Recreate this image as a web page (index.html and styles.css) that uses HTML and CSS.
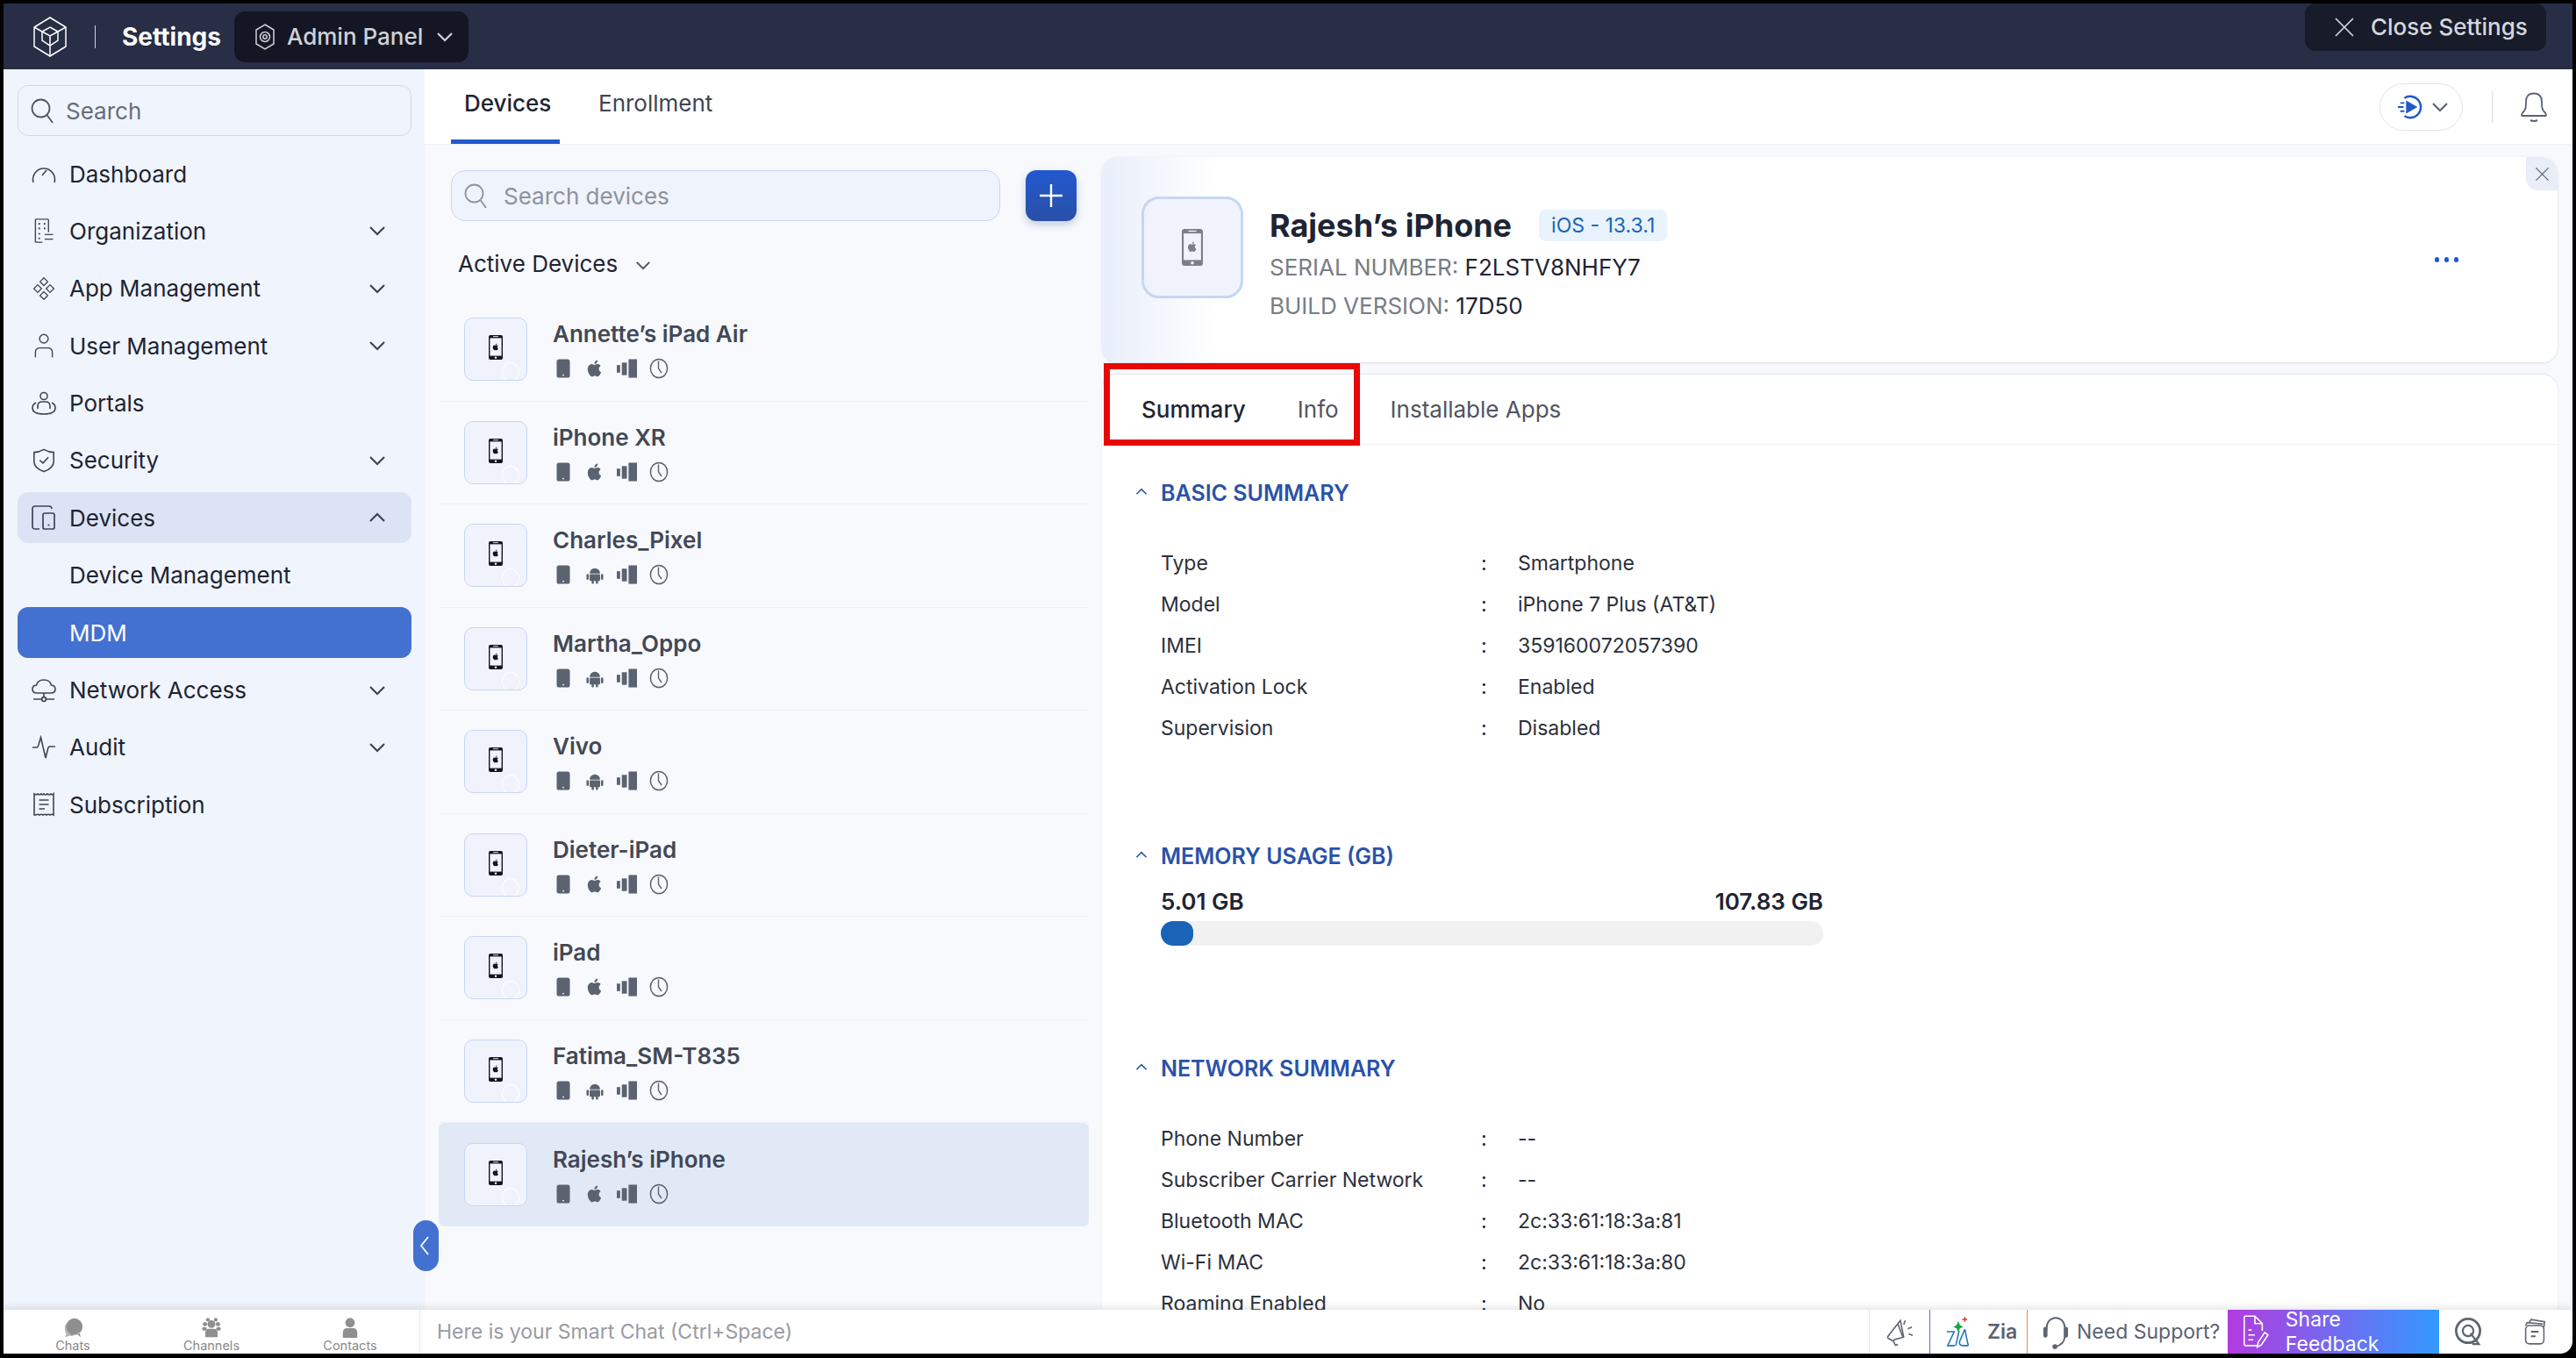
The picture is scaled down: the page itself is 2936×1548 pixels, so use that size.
FILE: index.html
```html
<!DOCTYPE html>
<html lang="en">
<head>
  <meta charset="UTF-8">
  <title>Settings - MDM</title>
  <link rel="stylesheet" href="styles.css">
</head>
<body>
  <svg class="defs">
    <symbol id="i-search" viewBox="0 0 26 30"><circle cx="11.5" cy="12.5" r="10" fill="none" stroke="currentColor" stroke-width="1.8"/><path d="M18.5 20 L25 29" fill="none" stroke="currentColor" stroke-width="1.8"/></symbol>
    <symbol id="i-down" viewBox="0 0 20 12"><path d="M2 2 L10 10 L18 2" fill="none" stroke="currentColor" stroke-width="2.2"/></symbol>
    <symbol id="i-up" viewBox="0 0 20 12"><path d="M2 10 L10 2 L18 10" fill="none" stroke="currentColor" stroke-width="2.2"/></symbol>
    <symbol id="i-close" viewBox="0 0 24 24"><path d="M2 2 L22 22 M22 2 L2 22" fill="none" stroke="currentColor" stroke-width="1.7"/></symbol>
    <symbol id="i-apple" viewBox="0 0 24 24"><path fill="currentColor" d="M17.05 12.54c-.03-2.6 2.12-3.85 2.22-3.91-1.21-1.77-3.09-2.01-3.76-2.04-1.6-.16-3.12.94-3.93.94-.81 0-2.06-.92-3.39-.89-1.74.03-3.35 1.01-4.25 2.57-1.81 3.14-.46 7.8 1.3 10.35.86 1.25 1.89 2.65 3.24 2.6 1.3-.05 1.79-.84 3.36-.84 1.57 0 2.01.84 3.39.81 1.4-.02 2.28-1.27 3.14-2.53.99-1.45 1.4-2.85 1.42-2.92-.03-.01-2.72-1.04-2.75-4.14zM14.47 4.9c.72-.87 1.2-2.08 1.07-3.28-1.03.04-2.28.69-3.02 1.55-.66.77-1.24 2-1.09 3.18 1.15.09 2.33-.58 3.04-1.45z"/></symbol>
    <symbol id="i-android" viewBox="0 0 24 24"><g fill="currentColor"><path d="M5.5 10.5 A6.5 6.5 0 0 1 18.5 10.5 Z"/><rect x="5.5" y="11.5" width="13" height="8.5" rx="1.2"/><rect x="1.6" y="11.2" width="2.8" height="7.4" rx="1.4"/><rect x="19.6" y="11.2" width="2.8" height="7.4" rx="1.4"/><rect x="8" y="19" width="2.8" height="4.4" rx="1.4"/><rect x="13.2" y="19" width="2.8" height="4.4" rx="1.4"/></g></symbol>
    <symbol id="i-phone" viewBox="0 0 16 22"><rect x="0.5" y="0.5" width="15" height="21" rx="2.6" fill="currentColor"/><circle cx="8" cy="18.6" r="0.9" fill="#fff"/></symbol>
    <symbol id="i-bars" viewBox="0 0 24 22"><g fill="currentColor"><rect x="0" y="7" width="4" height="9"/><rect x="6" y="4" width="6" height="15"/><rect x="14" y="0" width="10" height="22"/></g></symbol>
    <symbol id="i-clock" viewBox="0 0 22 24"><ellipse cx="11" cy="12" rx="9.6" ry="10.6" fill="none" stroke="currentColor" stroke-width="1.5"/><path d="M10.5 3.5 V12 L14 17" fill="none" stroke="currentColor" stroke-width="1.4"/></symbol>
    <symbol id="i-mini" viewBox="0 0 16 28"><rect width="16" height="28" rx="2" fill="currentColor"/><rect x="1.4" y="3.4" width="13.2" height="20.2" fill="#f0f3fb"/><circle cx="8" cy="25.8" r="1.2" fill="#f0f3fb"/><rect x="5" y="1.2" width="6" height="0.9" fill="#f0f3fb"/><use href="#i-apple" x="3.5" y="9" width="9" height="9"/></symbol>
  </svg>

  <div class="app">
    <header class="topbar">
      <svg class="logo" viewBox="0 0 40 46"><g fill="none" stroke="#fff" stroke-width="1.5"><path d="M20 1 L38 12 V34 L20 45 L2 34 V12 Z"/><path d="M20 12 L29 17 V27 L20 33 L11 27 V17 Z"/><path d="M11 17 L20 22 L29 17 M20 22 V33 M2 12 L11 17 M38 12 L29 17 M20 33 V45"/></g></svg>
      <span class="top-sep"></span>
      <span class="top-title">Settings</span>
      <div class="panel-btn">
        <svg class="panel-ico" viewBox="0 0 24 32"><g fill="none" stroke="#cfd2d8" stroke-width="1.5"><path d="M12 2 L22 8 V24 L12 30 L2 24 V8 Z"/><circle cx="12" cy="16" r="5.5"/><circle cx="12" cy="16" r="2.2"/></g></svg>
        <span>Admin Panel</span>
        <svg class="panel-arrow"><use href="#i-down"/></svg>
      </div>
      <div class="close-btn">
        <svg class="close-ico"><use href="#i-close"/></svg>
        <span>Close Settings</span>
      </div>
    </header>

    <div class="content">
      <aside class="sidebar">
        <div class="side-search">
          <svg class="search-ico"><use href="#i-search"/></svg>
          <span>Search</span>
        </div>
        <nav class="side-nav">
          <a class="side-item">
            <svg class="side-ico" viewBox="0 0 28 28"><g fill="none" stroke="currentColor" stroke-width="1.6"><path d="M2 24 A12.5 12.5 0 1 1 26 24"/><path d="M12 16 L17 10"/></g></svg>
            <span>Dashboard</span>
          </a>
          <a class="side-item">
            <svg class="side-ico" viewBox="0 0 28 32"><g fill="none" stroke="currentColor" stroke-width="1.6"><path d="M3 31 V2 Q3 1 4 1 H19 Q20 1 20 2 V18 M3 31 H12"/><path d="M15 21 H26 M15 27 H26"/></g><g fill="currentColor"><circle cx="8" cy="7" r="1.2"/><circle cx="15" cy="7" r="1.2"/><circle cx="8" cy="13" r="1.2"/><circle cx="15" cy="13" r="1.2"/><circle cx="8" cy="20" r="1.2"/><circle cx="8" cy="26" r="1.2"/></g></svg>
            <span>Organization</span>
            <svg class="side-arrow"><use href="#i-down"/></svg>
          </a>
          <a class="side-item">
            <svg class="side-ico" viewBox="0 0 28 32"><g fill="none" stroke="currentColor" stroke-width="1.5"><path d="M14 2 L19 7 L14 12 L9 7 Z"/><path d="M14 20 L19 25 L14 30 L9 25 Z"/><path d="M6 11 L11 16 L6 21 L1 16 Z"/><path d="M22 11 L27 16 L22 21 L17 16 Z"/></g></svg>
            <span>App Management</span>
            <svg class="side-arrow"><use href="#i-down"/></svg>
          </a>
          <a class="side-item">
            <svg class="side-ico" viewBox="0 0 28 32"><g fill="none" stroke="currentColor" stroke-width="1.6"><circle cx="14" cy="7" r="5.6"/><path d="M3 31 V25 Q3 19 9 19 H19 Q25 19 25 25 V31"/></g></svg>
            <span>User Management</span>
            <svg class="side-arrow"><use href="#i-down"/></svg>
          </a>
          <a class="side-item">
            <svg class="side-ico" viewBox="0 0 28 28"><g fill="none" stroke="currentColor" stroke-width="1.6"><circle cx="14" cy="5.5" r="4"/><path d="M7 20 V17 Q7 12 12 12 H16 Q21 12 21 17 V20"/><path d="M5 13 Q1 15 1 19 Q1 26 14 26 Q27 26 27 19 Q27 15 23 13"/></g></svg>
            <span>Portals</span>
          </a>
          <a class="side-item">
            <svg class="side-ico" viewBox="0 0 28 30"><g fill="none" stroke="currentColor" stroke-width="1.7"><path d="M14 1.5 Q20 5 26 5 V16 Q26 24 14 28.5 Q2 24 2 16 V5 Q8 5 14 1.5 Z"/><path d="M9 14.5 L13 18 L19.5 11"/></g></svg>
            <span>Security</span>
            <svg class="side-arrow"><use href="#i-down"/></svg>
          </a>
          <a class="side-item side-open">
            <svg class="side-ico" viewBox="0 0 28 28"><g fill="none" stroke="currentColor" stroke-width="1.7"><path d="M9 27 H4 Q1 27 1 24 V4 Q1 1 4 1 H20 Q23 1 23 4"/><rect x="13" y="9" width="13" height="18" rx="2"/></g><circle cx="19.5" cy="22.5" r="1" fill="currentColor"/></svg>
            <span>Devices</span>
            <svg class="side-arrow"><use href="#i-up"/></svg>
          </a>
          <a class="side-item side-sub"><span>Device Management</span></a>
          <a class="side-item side-sub side-current"><span>MDM</span></a>
          <a class="side-item">
            <svg class="side-ico" viewBox="0 0 28 26"><g fill="none" stroke="currentColor" stroke-width="1.6"><path d="M7 16 H6 Q1 16 1 11.5 Q1 7.5 5.5 7 Q7 1 14 1 Q21 1 22.5 7 Q27 7.5 27 11.5 Q27 16 22 16 Z"/><path d="M14 16 V21 M2 23 H11 M17 23 H26"/><circle cx="14" cy="23" r="2.4"/></g></svg>
            <span>Network Access</span>
            <svg class="side-arrow"><use href="#i-down"/></svg>
          </a>
          <a class="side-item">
            <svg class="side-ico" viewBox="0 0 28 28"><path d="M1 14 H6 Q7 14 8 11 L10.5 2.5 L16 26 L19 14 Q19.5 13 21 13 H27" fill="none" stroke="currentColor" stroke-width="1.6"/></svg>
            <span>Audit</span>
            <svg class="side-arrow"><use href="#i-down"/></svg>
          </a>
          <a class="side-item">
            <svg class="side-ico" viewBox="0 0 28 28"><g fill="none" stroke="currentColor" stroke-width="1.6"><path d="M3 2 Q5 3.5 7 2 Q9 3.5 11 2 Q13 3.5 14 2 Q16 3.5 18 2 Q20 3.5 22 2 Q24 3.5 25 2 V26 Q23 24.5 21 26 Q19 24.5 17 26 Q15 24.5 13 26 Q11 24.5 9 26 Q7 24.5 5 26 L3 26 Z"/><path d="M8.5 9 H19.5 M8.5 14 H19.5 M8.5 19 H15"/></g></svg>
            <span>Subscription</span>
          </a>
        </nav>
      </aside>

      <main class="main">
        <div class="tabbar">
          <a class="tabbar-tab tabbar-active">Devices</a>
          <a class="tabbar-tab">Enrollment</a>
          <div class="tour-btn">
            <svg class="tour-ico" viewBox="0 0 32 32"><path d="M9 5 A13 13 0 1 1 9 27" fill="none" stroke="#2258cf" stroke-width="2.6"/><path d="M11 8 L25 16 L11 24 Z" fill="#2258cf"/><path d="M4 11 H9 M1 16 H8 M4 21 H9" fill="none" stroke="#2258cf" stroke-width="2"/></svg>
            <svg class="tour-arrow"><use href="#i-down"/></svg>
          </div>
          <span class="tabbar-sep"></span>
          <svg class="bell" viewBox="0 0 30 34"><g fill="none" stroke="#5b6270" stroke-width="1.8"><path d="M1 26 Q1 24 4 21.5 Q6 19 6 14 V11 Q6 1.5 15 1.5 Q24 1.5 24 11 V14 Q24 19 26 21.5 Q29 24 29 26 Q29 27 28 27 H2 Q1 27 1 26 Z"/><path d="M11 32 Q15 34 19 32" stroke-width="2"/></g></svg>
        </div>

        <div class="work">
          <section class="devices">
            <div class="devices-top">
              <div class="dev-search">
                <svg class="dev-search-ico"><use href="#i-search"/></svg>
                <span>Search devices</span>
              </div>
              <button class="add-btn"><svg viewBox="0 0 28 28"><path d="M14 1 V27 M1 14 H27" fill="none" stroke="#fff" stroke-width="2.4"/></svg></button>
            </div>
            <div class="dev-filter">
              <span>Active Devices</span>
              <svg><use href="#i-down"/></svg>
            </div>
            <ul class="dev-list">
              <li class="dev-row">
                <div class="dev-thumb"><svg class="mini"><use href="#i-mini"/></svg></div>
                <div class="dev-info"><div class="dev-name">Annette’s iPad Air</div>
                  <div class="dev-icons"><svg class="st-phone"><use href="#i-phone"/></svg><svg class="st-os"><use href="#i-apple"/></svg><svg class="st-bars"><use href="#i-bars"/></svg><svg class="st-clock"><use href="#i-clock"/></svg></div></div>
              </li>
              <li class="dev-row">
                <div class="dev-thumb"><svg class="mini"><use href="#i-mini"/></svg></div>
                <div class="dev-info"><div class="dev-name">iPhone XR</div>
                  <div class="dev-icons"><svg class="st-phone"><use href="#i-phone"/></svg><svg class="st-os"><use href="#i-apple"/></svg><svg class="st-bars"><use href="#i-bars"/></svg><svg class="st-clock"><use href="#i-clock"/></svg></div></div>
              </li>
              <li class="dev-row">
                <div class="dev-thumb"><svg class="mini"><use href="#i-mini"/></svg></div>
                <div class="dev-info"><div class="dev-name">Charles_Pixel</div>
                  <div class="dev-icons"><svg class="st-phone"><use href="#i-phone"/></svg><svg class="st-os"><use href="#i-android"/></svg><svg class="st-bars"><use href="#i-bars"/></svg><svg class="st-clock"><use href="#i-clock"/></svg></div></div>
              </li>
              <li class="dev-row">
                <div class="dev-thumb"><svg class="mini"><use href="#i-mini"/></svg></div>
                <div class="dev-info"><div class="dev-name">Martha_Oppo</div>
                  <div class="dev-icons"><svg class="st-phone"><use href="#i-phone"/></svg><svg class="st-os"><use href="#i-android"/></svg><svg class="st-bars"><use href="#i-bars"/></svg><svg class="st-clock"><use href="#i-clock"/></svg></div></div>
              </li>
              <li class="dev-row">
                <div class="dev-thumb"><svg class="mini"><use href="#i-mini"/></svg></div>
                <div class="dev-info"><div class="dev-name">Vivo</div>
                  <div class="dev-icons"><svg class="st-phone"><use href="#i-phone"/></svg><svg class="st-os"><use href="#i-android"/></svg><svg class="st-bars"><use href="#i-bars"/></svg><svg class="st-clock"><use href="#i-clock"/></svg></div></div>
              </li>
              <li class="dev-row">
                <div class="dev-thumb"><svg class="mini"><use href="#i-mini"/></svg></div>
                <div class="dev-info"><div class="dev-name">Dieter-iPad</div>
                  <div class="dev-icons"><svg class="st-phone"><use href="#i-phone"/></svg><svg class="st-os"><use href="#i-apple"/></svg><svg class="st-bars"><use href="#i-bars"/></svg><svg class="st-clock"><use href="#i-clock"/></svg></div></div>
              </li>
              <li class="dev-row">
                <div class="dev-thumb"><svg class="mini"><use href="#i-mini"/></svg></div>
                <div class="dev-info"><div class="dev-name">iPad</div>
                  <div class="dev-icons"><svg class="st-phone"><use href="#i-phone"/></svg><svg class="st-os"><use href="#i-apple"/></svg><svg class="st-bars"><use href="#i-bars"/></svg><svg class="st-clock"><use href="#i-clock"/></svg></div></div>
              </li>
              <li class="dev-row">
                <div class="dev-thumb"><svg class="mini"><use href="#i-mini"/></svg></div>
                <div class="dev-info"><div class="dev-name">Fatima_SM-T835</div>
                  <div class="dev-icons"><svg class="st-phone"><use href="#i-phone"/></svg><svg class="st-os"><use href="#i-android"/></svg><svg class="st-bars"><use href="#i-bars"/></svg><svg class="st-clock"><use href="#i-clock"/></svg></div></div>
              </li>
              <li class="dev-row dev-selected">
                <div class="dev-thumb"><svg class="mini"><use href="#i-mini"/></svg></div>
                <div class="dev-info"><div class="dev-name">Rajesh’s iPhone</div>
                  <div class="dev-icons"><svg class="st-phone"><use href="#i-phone"/></svg><svg class="st-os"><use href="#i-apple"/></svg><svg class="st-bars"><use href="#i-bars"/></svg><svg class="st-clock"><use href="#i-clock"/></svg></div></div>
              </li>
            </ul>
          </section>

          <section class="detail">
            <div class="det-head">
              <div class="det-thumb"><svg class="det-phone"><use href="#i-mini"/></svg></div>
              <div class="det-text">
                <div class="det-title"><h1>Rajesh’s iPhone</h1><span class="os-badge">iOS - 13.3.1</span></div>
                <div class="det-line"><span>SERIAL NUMBER:</span> F2LSTV8NHFY7</div>
                <div class="det-line"><span>BUILD VERSION:</span> 17D50</div>
              </div>
              <div class="det-dots"><i></i><i></i><i></i></div>
              <div class="det-close"><svg><use href="#i-close"/></svg></div>
            </div>

            <div class="det-body">
              <div class="det-tabs">
                <a class="det-tab det-tab-on">Summary</a>
                <a class="det-tab">Info</a>
                <a class="det-tab">Installable Apps</a>
              </div>

              <div class="sec-head"><svg><use href="#i-up"/></svg>BASIC SUMMARY</div>
              <dl class="kv">
                <div class="kv-row"><dt>Type</dt><b>:</b><dd>Smartphone</dd></div>
                <div class="kv-row"><dt>Model</dt><b>:</b><dd>iPhone 7 Plus (AT&amp;T)</dd></div>
                <div class="kv-row"><dt>IMEI</dt><b>:</b><dd>359160072057390</dd></div>
                <div class="kv-row"><dt>Activation Lock</dt><b>:</b><dd>Enabled</dd></div>
                <div class="kv-row"><dt>Supervision</dt><b>:</b><dd>Disabled</dd></div>
              </dl>

              <div class="sec-head sec-memory"><svg><use href="#i-up"/></svg>MEMORY USAGE (GB)</div>
              <div class="mem">
                <div class="mem-vals"><span>5.01 GB</span><span>107.83 GB</span></div>
                <div class="mem-bar"><div class="mem-fill" style="width: 4.9%"></div></div>
              </div>

              <div class="sec-head sec-network"><svg><use href="#i-up"/></svg>NETWORK SUMMARY</div>
              <dl class="kv">
                <div class="kv-row"><dt>Phone Number</dt><b>:</b><dd>--</dd></div>
                <div class="kv-row"><dt>Subscriber Carrier Network</dt><b>:</b><dd>--</dd></div>
                <div class="kv-row"><dt>Bluetooth MAC</dt><b>:</b><dd>2c:33:61:18:3a:81</dd></div>
                <div class="kv-row"><dt>Wi-Fi MAC</dt><b>:</b><dd>2c:33:61:18:3a:80</dd></div>
                <div class="kv-row"><dt>Roaming Enabled</dt><b>:</b><dd>No</dd></div>
              </dl>
            </div>
            <div class="red-mark"></div>
          </section>
        </div>
      </main>

      <div class="side-toggle"><svg viewBox="0 0 12 24"><path d="M10 2 L2 12 L10 22" fill="none" stroke="#fff" stroke-width="1.8"/></svg></div>
    </div>

    <footer class="footer">
      <div class="foot-apps">
        <div class="foot-app">
          <svg viewBox="0 0 28 28"><path d="M11 5 Q2 7 3 16 Q3 20 5 23 L3 27 L10 25 Q13 26 15 25 Z" fill="#b5b5b5"/><path d="M16 1 A11.5 11.5 0 0 1 16 24 L12 24 L10 22 Q5 18 5 12 A11.5 11.5 0 0 1 16 1 Z M20 23 L25 27 L23 20 Z" fill="#8f8f8f"/></svg>
          <span>Chats</span>
        </div>
        <div class="foot-app">
          <svg viewBox="0 0 28 28"><g fill="#8f8f8f"><circle cx="14" cy="9" r="5.4"/><path d="M5.5 27 V21 Q5.5 15.5 10 15.5 H18 Q22.5 15.5 22.5 21 V27 Z"/><circle cx="5" cy="9" r="3"/><circle cx="23" cy="9" r="3"/><circle cx="9" cy="3" r="2.6"/><circle cx="20" cy="3" r="2.6"/><rect x="1" y="13" width="6.5" height="5" rx="2.4"/><rect x="20.5" y="13" width="6.5" height="5" rx="2.4"/></g></svg>
          <span>Channels</span>
        </div>
        <div class="foot-app">
          <svg viewBox="0 0 28 28"><g fill="#8f8f8f"><circle cx="14" cy="7" r="6.6"/><path d="M4 28 V21 Q4 14.5 10 14.5 H18 Q24 14.5 24 21 V28 Z"/></g></svg>
          <span>Contacts</span>
        </div>
      </div>
      <div class="foot-chat">Here is your Smart Chat (Ctrl+Space)</div>
      <div class="foot-item foot-announce">
        <svg viewBox="0 0 34 36"><g fill="none" stroke="#5f6570" stroke-width="1.7"><path d="M18 4 L3 23 Q2 25 4 26 L8 28 Q10 29 11 27 L22 24 Z"/><path d="M15 8 L21 24"/><path d="M9 28 L12 34 L15 33"/><path d="M24 4 L22 9 M32 12 L27 14 M33 22 L28 20"/></g></svg>
      </div>
      <div class="foot-item foot-zia">
        <svg viewBox="0 0 30 38"><path d="M2 19 H11 L3 36 H12 M13 36 L17 18 M24 16 L18 30 Q16 36 22 36 H27 Q29 36 27.5 33 L24 16" fill="none" stroke="#2376bd" stroke-width="1.7"/><path d="M16 6 L18 11 L22 13 L18 15 L16 20 L14 15 L10 13 L14 11 Z" fill="#18a34a"/><path d="M24 1 V7 M21 4 H27" stroke="#e03131" stroke-width="1.6"/></svg>
        <span>Zia</span>
      </div>
      <div class="foot-item foot-help">
        <svg viewBox="0 0 32 42"><g fill="none" stroke="#5f6570" stroke-width="2"><path d="M5 17 V14 A11 12 0 0 1 27 14 V24 Q27 34 16 37"/></g><g fill="#5f6570"><rect x="1" y="13" width="5" height="13" rx="2.4"/><rect x="26" y="13" width="5" height="13" rx="2.4"/><circle cx="15" cy="37" r="3"/></g></svg>
        <span>Need Support?</span>
      </div>
      <div class="foot-feedback">
        <svg viewBox="0 0 32 42"><g fill="none" stroke="#fff" stroke-width="1.7"><path d="M19 38 H4 Q2 38 2 36 V4 Q2 2 4 2 H15 L24 11 V20 M15 2 V11 H24"/><path d="M7 19 H11 M7 25 H15 M7 31 H13"/><path d="M18 40 L19 34 L27 22 L31 25 L23 37 Z"/></g></svg>
        <span>Share Feedback</span>
      </div>
      <div class="foot-q">
        <svg viewBox="0 0 34 36"><g fill="none" stroke="#5f6570" stroke-width="3"><circle cx="17" cy="17" r="14.5"/></g><g fill="none" stroke="#5f6570" stroke-width="2.4"><circle cx="17" cy="17" r="6.5"/><path d="M20 20 L30 33 H22"/></g></svg>
      </div>
      <div class="foot-notes">
        <svg viewBox="0 0 30 36"><g fill="none" stroke="#5f6570" stroke-width="1.8"><path d="M8 6 L10 2 L28 5 L27 12"/><path d="M3 10 L5 6 L26 8"/><rect x="3" y="10" width="24" height="24" rx="5"/><path d="M10 18 H20 M10 24 H16" stroke-width="2.2"/></g></svg>
      </div>
    </footer>
  </div>
</body>
</html>
```

FILE: styles.css
```css
* {
  box-sizing: border-box;
}

html, body {
  height: 100%;
}

body {
  margin: 0;
  background: #000;
  font-family: Inter, "Noto Sans", sans-serif;
  color: #1e2433;
  overflow: hidden;
}

.defs {
  display: none;
}

.app {
  display: flex;
  flex-direction: column;
  height: 1548px;
  padding: 4px 4px 5px 4px;
}

/* top bar */
.topbar {
  display: flex;
  align-items: center;
  flex: none;
  height: 75px;
  background: #282e45;
  padding-left: 33px;
}

.logo {
  width: 40px;
  height: 46px;
}

.top-sep {
  width: 1px;
  height: 26px;
  margin-left: 31px;
  background: #cfd2d8;
}

.top-title {
  margin-left: 30px;
  font-size: 28px;
  font-weight: 700;
  color: #fff;
}

.panel-btn {
  display: flex;
  align-items: center;
  width: 267px;
  height: 58px;
  margin-left: 15px;
  padding-left: 23px;
  border-radius: 12px;
  background: #141723;
  font-size: 26px;
  font-weight: 500;
  color: #cfd2d8;
}

.panel-ico {
  width: 24px;
  height: 32px;
  margin-right: 13px;
}

.panel-arrow {
  width: 20px;
  height: 12px;
  margin-left: 15px;
}

.close-btn {
  display: flex;
  align-items: center;
  width: 275px;
  height: 54px;
  margin-left: auto;
  margin-right: 30px;
  margin-top: -22px;
  padding-left: 33px;
  border-radius: 12px;
  background: #181c2a;
  font-size: 26px;
  font-weight: 500;
  color: #d5d7dc;
}

.close-ico {
  width: 24px;
  height: 24px;
  margin-right: 18px;
}

/* layout */
.content {
  position: relative;
  display: flex;
  flex: 1;
  min-height: 0;
}

.sidebar {
  flex: none;
  width: 480px;
  padding: 18px 15px 0 16px;
  background: #f0f4fc;
}

.side-search {
  display: flex;
  align-items: center;
  height: 58px;
  padding-left: 14px;
  border: 1.5px solid #d5d9e0;
  border-radius: 12px;
  font-size: 26px;
  color: #676d79;
}

.search-ico {
  width: 26px;
  height: 30px;
  margin-right: 14px;
  color: #4f5562;
}

.side-nav {
  display: flex;
  flex-direction: column;
  gap: 7.4px;
  margin-top: 14px;
}

.side-item {
  display: flex;
  align-items: center;
  height: 58px;
  padding: 0 29px 0 16px;
  border-radius: 12px;
  font-size: 26px;
}

.side-ico {
  flex: none;
  width: 28px;
  height: 28px;
  margin-right: 15px;
  color: #3f4552;
}

.side-sub {
  padding-left: 59px;
}

.side-arrow {
  width: 20px;
  height: 12px;
  margin-left: auto;
  color: #3f4552;
}

.side-open {
  background: #dce3f4;
}

.side-current {
  background: #4371d1;
  color: #fff;
}

.main {
  display: flex;
  flex-direction: column;
  flex: 1;
  min-width: 0;
}

/* devices / enrollment bar */
.tabbar {
  display: flex;
  align-items: center;
  flex: none;
  height: 86px;
  padding: 0 29px 0 30px;
  background: #fff;
  border-bottom: 1.5px solid #eef0f5;
}

.tabbar-tab {
  position: relative;
  display: flex;
  align-items: center;
  height: 100%;
  padding: 0 15px 8px;
  margin-right: 14px;
  font-size: 26px;
  color: #3f4552;
}

.tabbar-active {
  width: 124px;
  padding-bottom: 8px;
  font-weight: 500;
  color: #1e2433;
  border-bottom: 5px solid #2258cf;
  padding-top: 5px;
  margin-right: 29px;
}

.tour-btn {
  display: flex;
  align-items: center;
  width: 95px;
  height: 54px;
  margin-left: auto;
  padding-left: 19px;
  border: 1.5px solid #e3e5e9;
  border-radius: 27px;
}

.tour-ico {
  width: 30px;
  height: 30px;
}

.tour-arrow {
  width: 20px;
  height: 12px;
  margin-left: 9px;
  color: #5b6270;
}

.tabbar-sep {
  width: 1.5px;
  height: 36px;
  margin: 0 32px 0 33px;
  background: #d9dce2;
}

.bell {
  width: 30px;
  height: 34px;
}

.work {
  display: flex;
  flex: 1;
  min-height: 0;
}

/* device list */
.devices {
  flex: none;
  width: 772px;
  padding-top: 29px;
  background: #f7f9fd;
  overflow: hidden;
}

.devices-top {
  display: flex;
  padding-left: 30px;
}

.dev-search {
  display: flex;
  align-items: center;
  width: 626px;
  height: 58px;
  padding-left: 14px;
  border: 1.5px solid #c8d6f4;
  border-radius: 16px;
  background: #eff3fb;
  font-size: 26px;
  color: #8d929c;
}

.dev-search-ico {
  width: 26px;
  height: 30px;
  margin-right: 19px;
  color: #8d929c;
}

.add-btn {
  display: flex;
  align-items: center;
  justify-content: center;
  width: 58px;
  height: 58px;
  margin-left: 29px;
  padding: 0;
  border: none;
  border-radius: 12px;
  background: linear-gradient(180deg, #2258cf, #2a50a6);
  box-shadow: 0 4px 8px rgba(40, 70, 140, 0.25);
}

.add-btn svg {
  width: 28px;
  height: 28px;
}

.dev-filter {
  display: flex;
  align-items: center;
  height: 34px;
  margin-top: 31px;
  padding-left: 38px;
  font-size: 26px;
}

.dev-filter svg {
  width: 18px;
  height: 11px;
  margin-left: 20px;
  margin-top: 4px;
  color: #4f5562;
}

.dev-list {
  margin: 23px 15px 0 16px;
  padding: 0;
  list-style: none;
}

.dev-row {
  display: flex;
  align-items: center;
  height: 117.5px;
  padding-left: 29px;
  border-bottom: 1.5px solid #eef0f5;
}

.dev-selected {
  background: #e2e9f6;
  border-bottom: none;
  border-radius: 6px;
}

.dev-thumb {
  position: relative;
  display: flex;
  align-items: center;
  justify-content: center;
  flex: none;
  width: 72px;
  height: 72px;
  border: 1.5px solid #c8d6f4;
  border-radius: 10px;
  background: #f0f3fb;
  overflow: hidden;
}

.dev-thumb::after {
  content: "";
  position: absolute;
  right: 8px;
  bottom: -2px;
  width: 18px;
  height: 20px;
  border: 1.5px solid #fff;
  border-radius: 50%;
}

.mini {
  width: 16px;
  height: 28px;
  margin-bottom: 4px;
  color: #14161d;
}

.dev-info {
  margin-left: 29px;
}

.dev-name {
  font-size: 26px;
  font-weight: 600;
  line-height: 34px;
  color: #424856;
}

.dev-icons {
  display: flex;
  align-items: center;
  height: 24px;
  margin-top: 10px;
  padding-left: 4px;
  color: #5b6270;
}

.st-phone {
  width: 16px;
  height: 22px;
}

.st-os {
  width: 22px;
  height: 22px;
  margin-left: 17px;
}

.st-bars {
  width: 23px;
  height: 22px;
  margin-left: 14px;
}

.st-clock {
  width: 22px;
  height: 24px;
  margin-left: 14px;
}

/* detail panel */
.detail {
  position: relative;
  display: flex;
  flex-direction: column;
  flex: 1;
  min-width: 0;
  padding: 14px 17px 0 0;
  background: #f7f9fd;
}

.det-head {
  position: relative;
  display: flex;
  flex: none;
  height: 234px;
  padding: 45px 0 0 45px;
  border-radius: 18px;
  background: linear-gradient(90deg, #e8eefa 0, #fff 130px);
  box-shadow: 0 1px 3px rgba(60, 70, 100, 0.15);
}

.det-thumb {
  display: flex;
  align-items: center;
  justify-content: center;
  flex: none;
  width: 116px;
  height: 116px;
  border: 3.5px solid #c8d6f4;
  border-radius: 20px;
  background: #f0f3fb;
}

.det-phone {
  width: 24px;
  height: 44px;
  color: #7b8088;
}

.det-text {
  margin: 11px 0 0 30px;
}

.det-title {
  display: flex;
  align-items: center;
  height: 44px;
}

.det-title h1 {
  margin: 0;
  font-size: 36px;
  font-weight: 700;
  color: #1e2433;
}

.os-badge {
  margin-left: 31px;
  padding: 0 14px;
  line-height: 36px;
  border-radius: 8px;
  background: #e8f3fd;
  font-size: 23px;
  color: #1a64b8;
}

.det-line {
  margin-top: 8px;
  line-height: 36px;
  font-size: 26px;
  color: #1e2433;
}

.det-line:first-of-type {
  margin-top: 11px;
}

.det-line span {
  color: #787d85;
}

.det-dots {
  display: flex;
  gap: 5.5px;
  align-self: center;
  margin-left: auto;
  margin-right: 113px;
  margin-top: -45px;
}

.det-dots i {
  width: 5.5px;
  height: 5.5px;
  border-radius: 50%;
  background: #2258cf;
}

.det-close {
  position: absolute;
  top: 0;
  right: 0;
  display: flex;
  align-items: center;
  justify-content: center;
  width: 36px;
  height: 38px;
  border-radius: 0 18px 0 14px;
  background: #e8edf8;
  color: #5b6270;
}

.det-close svg {
  width: 17px;
  height: 17px;
}

.det-body {
  flex: 1;
  min-height: 0;
  margin-top: 14px;
  padding-bottom: 0;
  border-radius: 18px 18px 0 0;
  background: #fff;
  box-shadow: 0 -1px 2px rgba(60, 70, 100, 0.12);
  overflow: hidden;
}

.det-tabs {
  display: flex;
  align-items: center;
  height: 80px;
  padding-left: 45px;
  border-bottom: 1.5px solid #eef0f5;
  font-size: 26px;
  color: #4f5562;
}

.det-tab {
  margin-right: 59px;
}

.det-tab-on {
  font-weight: 500;
  color: #1e2433;
}

.sec-head {
  position: relative;
  display: flex;
  align-items: center;
  height: 30px;
  margin-top: 40px;
  padding-left: 67px;
  font-size: 25px;
  font-weight: 600;
  color: #2a52a8;
}

.sec-head svg {
  position: absolute;
  left: 38px;
  top: 9px;
  width: 14px;
  height: 9px;
  color: #2a52a8;
}

.sec-memory {
  margin-top: 108px;
}

.sec-network {
  margin-top: 125px;
}

.kv {
  margin: 41px 0 0 67px;
}

.kv-row {
  display: grid;
  grid-template-columns: 365px 42px 1fr;
  align-items: center;
  height: 47px;
  font-size: 23px;
}

.kv-row dt {
  color: #2b303c;
}

.kv-row b {
  font-weight: 400;
}

.kv-row dd {
  margin: 0;
  color: #2b303c;
}

.mem {
  width: 755px;
  margin: 21px 0 0 67px;
}

.mem-vals {
  display: flex;
  justify-content: space-between;
  height: 38px;
  font-size: 26px;
  font-weight: 600;
  line-height: 32px;
}

.mem-bar {
  height: 28px;
  border-radius: 14px;
  background: #f1f1f1;
  overflow: hidden;
}

.mem-fill {
  height: 100%;
  border-radius: 12px;
  background: #1a64b8;
}

.red-mark {
  position: absolute;
  left: 2px;
  top: 0px;
  width: 292px;
  height: 94px;
  margin-top: 249px;
  border: 7.5px solid #e80808;
}

.side-toggle {
  position: absolute;
  left: 467px;
  top: 1312px;
  display: flex;
  align-items: center;
  justify-content: center;
  width: 29px;
  height: 58px;
  border-radius: 15px;
  background: #4371d1;
}

.side-toggle svg {
  width: 12px;
  height: 24px;
  margin-right: 4px;
}

/* bottom bar */
.footer {
  position: relative;
  display: flex;
  align-items: stretch;
  flex: none;
  height: 50px;
  background: #fff;
  border-radius: 0 0 14px 0;
  box-shadow: 0 -2px 8px rgba(40, 45, 60, 0.14);
  overflow: hidden;
}

.foot-apps {
  display: grid;
  grid-template-columns: repeat(3, 1fr);
  flex: none;
  width: 475px;
  border-right: 1.5px solid #e8e8e8;
}

.foot-app {
  display: flex;
  flex-direction: column;
  align-items: center;
  padding-top: 9px;
  font-size: 14.5px;
  line-height: 17px;
  color: #8a8a8a;
}

.foot-app svg {
  flex: none;
  width: 26px;
  height: 23px;
}

.foot-chat {
  flex: 1;
  padding-left: 19px;
  line-height: 50px;
  font-size: 23px;
  color: #989ba1;
}

.foot-item {
  display: flex;
  align-items: center;
  flex: none;
  font-size: 23px;
  color: #5b6270;
}

.foot-announce {
  justify-content: center;
  width: 69px;
  border-left: 1.5px solid #e8e8e8;
}

.foot-announce svg {
  width: 32px;
  height: 35px;
}

.foot-zia {
  width: 111px;
  padding-left: 17px;
  border-left: 1.5px solid #6a62e0;
  font-weight: 600;
}

.foot-zia svg {
  width: 28px;
  height: 38px;
  margin-right: 20px;
}

.foot-help {
  width: 229px;
  padding-left: 17px;
  border-left: 1.5px solid #ee8a3c;
}

.foot-help svg {
  width: 30px;
  height: 40px;
  margin-right: 9px;
  margin-top: 4px;
}

.foot-feedback {
  display: flex;
  align-items: center;
  flex: none;
  width: 241px;
  padding-left: 17px;
  background: linear-gradient(90deg, #b23be0, #3399ff);
  font-size: 23px;
  color: #fff;
}

.foot-feedback svg {
  width: 30px;
  height: 40px;
  margin-right: 19px;
}

.foot-q {
  display: flex;
  align-items: center;
  justify-content: center;
  flex: none;
  width: 65px;
}

.foot-q svg {
  width: 32px;
  height: 34px;
}

.foot-notes {
  display: flex;
  align-items: center;
  justify-content: center;
  flex: none;
  width: 87px;
}

.foot-notes svg {
  width: 26px;
  height: 34px;
}
```
